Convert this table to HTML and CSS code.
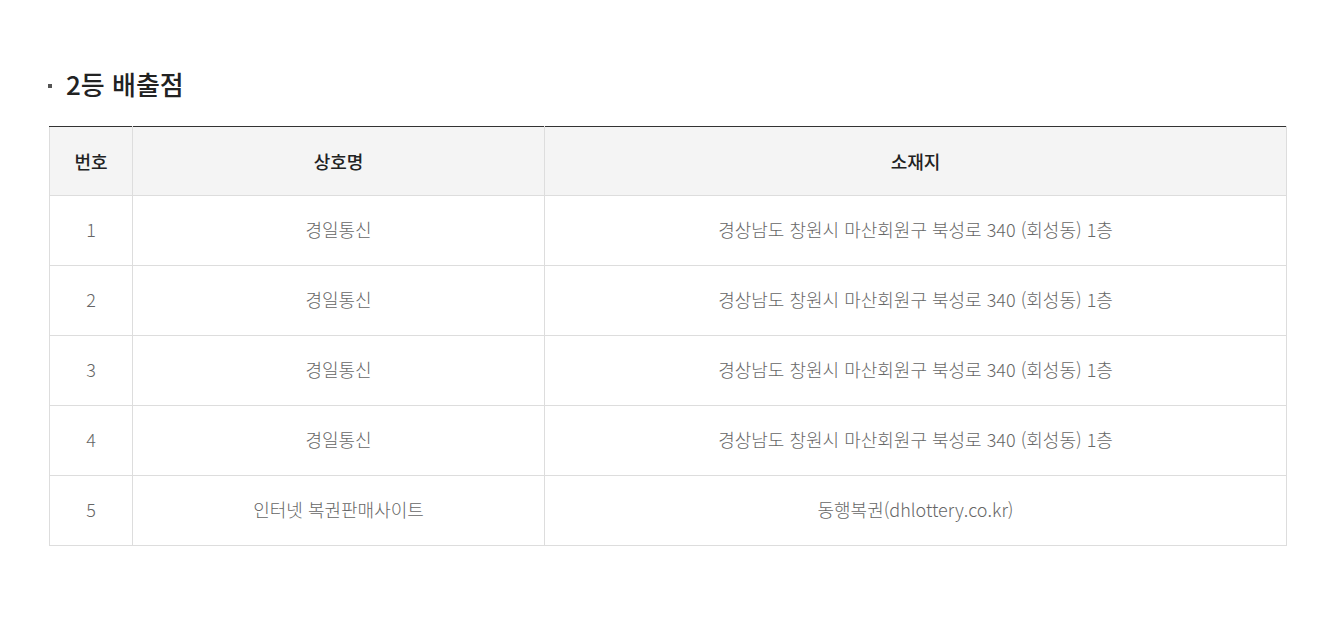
FILE: index.html
```html
<!DOCTYPE html>
<html lang="ko">
<head>
    <meta charset="UTF-8">
    <title>2등 배출점</title>
    <link rel="stylesheet" href="styles.css">
</head>
<body>
    <div class="container">
        <h3 class="title">2등 배출점</h3>
        <table class="shop-table">
            <colgroup>
                <col class="col-no">
                <col class="col-name">
                <col class="col-addr">
            </colgroup>
            <thead>
                <tr>
                    <th>번호</th>
                    <th>상호명</th>
                    <th>소재지</th>
                </tr>
            </thead>
            <tbody>
                <tr>
                    <td>1</td>
                    <td>경일통신</td>
                    <td>경상남도 창원시 마산회원구 북성로 340 (회성동) 1층</td>
                </tr>
                <tr>
                    <td>2</td>
                    <td>경일통신</td>
                    <td>경상남도 창원시 마산회원구 북성로 340 (회성동) 1층</td>
                </tr>
                <tr>
                    <td>3</td>
                    <td>경일통신</td>
                    <td>경상남도 창원시 마산회원구 북성로 340 (회성동) 1층</td>
                </tr>
                <tr>
                    <td>4</td>
                    <td>경일통신</td>
                    <td>경상남도 창원시 마산회원구 북성로 340 (회성동) 1층</td>
                </tr>
                <tr>
                    <td>5</td>
                    <td>인터넷 복권판매사이트</td>
                    <td>동행복권(dhlottery.co.kr)</td>
                </tr>
            </tbody>
        </table>
    </div>
</body>
</html>
```

FILE: styles.css
```css
body {
    margin: 0;
    background: #fff;
    font-family: "Noto Sans CJK KR", "Noto Sans", sans-serif;
    color: #222;
}
.container {
    padding: 66px 43px 0 49px;
}
.title {
    position: relative;
    margin: 0 0 24px;
    padding-left: 17px;
    font-size: 26px;
    font-weight: 500;
    line-height: 36px;
    color: #222;
}
.title::before {
    content: "";
    position: absolute;
    left: -1px;
    top: 18px;
    width: 4px;
    height: 4px;
    background: #555;
}
.shop-table {
    width: 100%;
    border-collapse: collapse;
    table-layout: fixed;
}
.col-no {
    width: 83px;
}
.col-name {
    width: 412px;
}
.shop-table th,
.shop-table td {
    border: 1px solid #ddd;
    text-align: center;
    padding: 0 10px;
}
.shop-table thead th {
    border-top: 1px solid #333;
}
.shop-table th {
    height: 68px;
    background: #f4f4f4;
    font-size: 18px;
    font-weight: 500;
    color: #222;
}
.shop-table td {
    height: 66px;
    padding-bottom: 3px;
    font-size: 18px;
    font-weight: 300;
    color: #666;
}
```
